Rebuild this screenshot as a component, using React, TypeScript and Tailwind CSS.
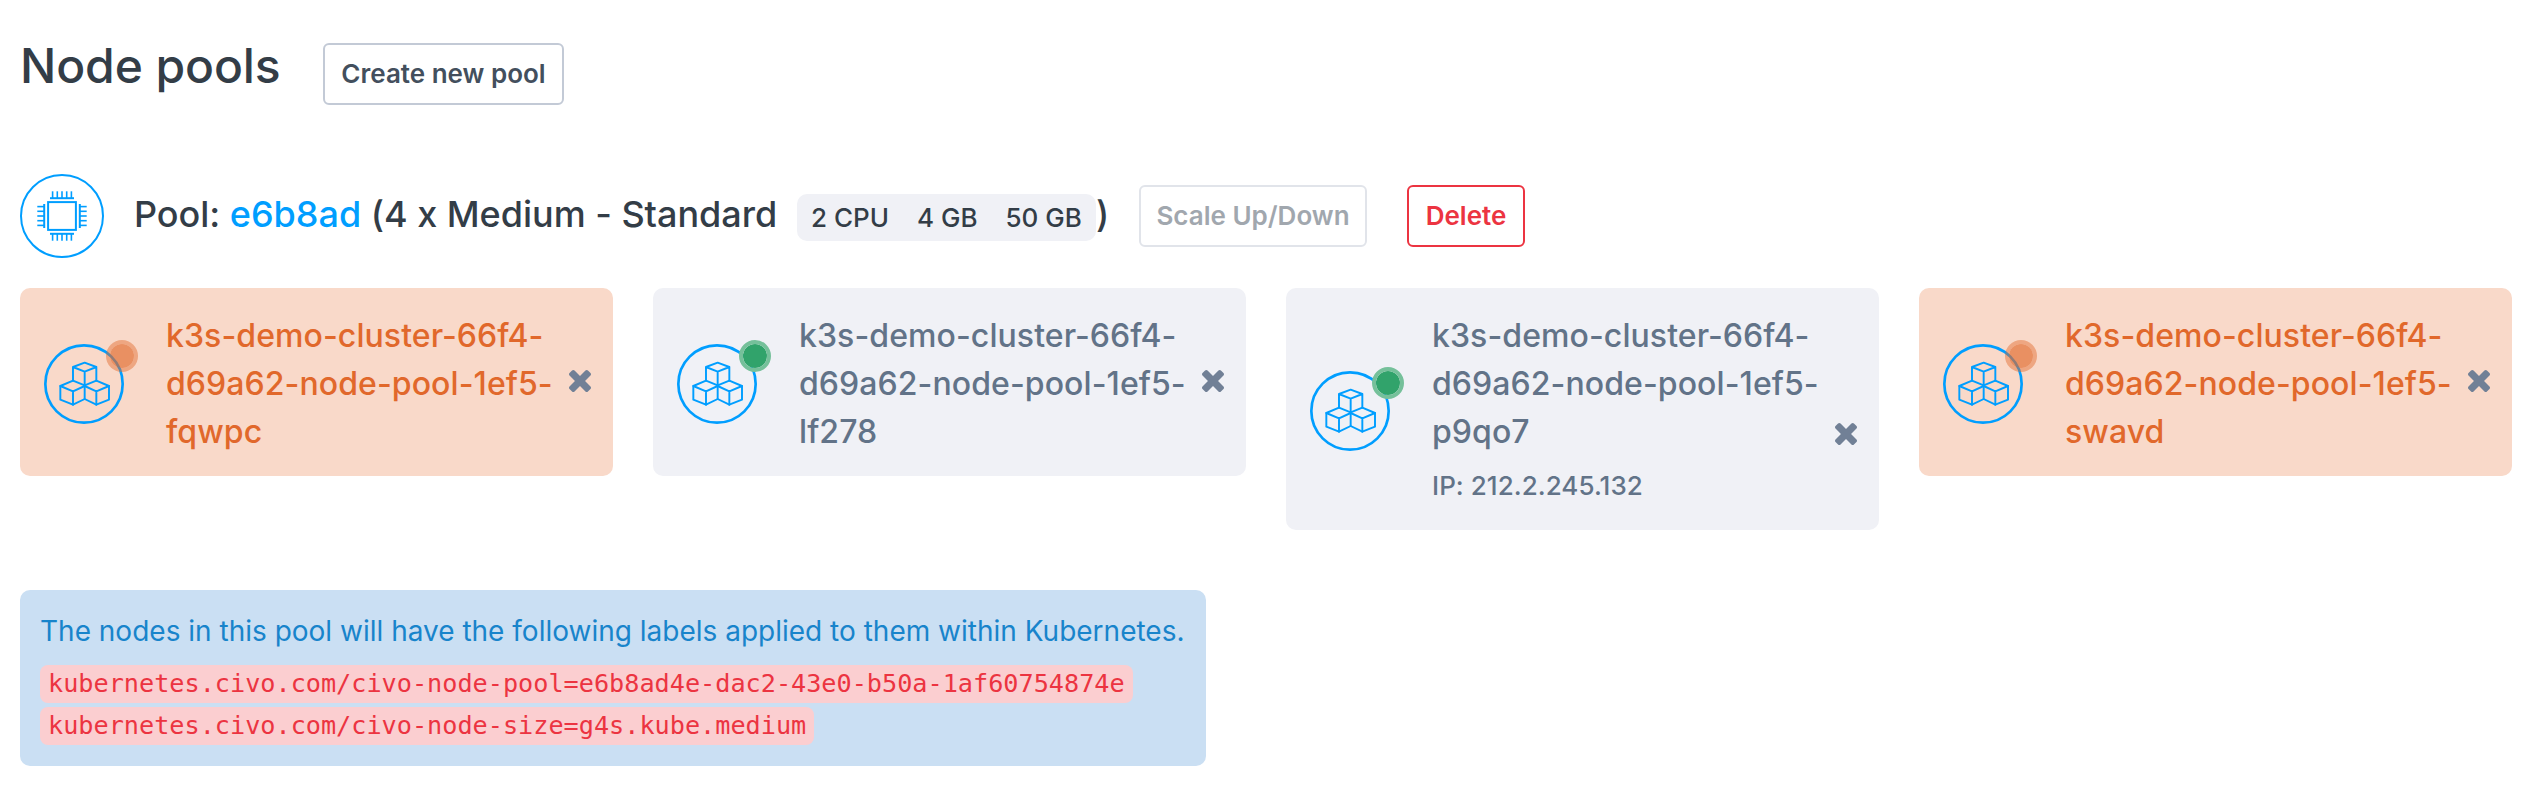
import React from "react";

type PoolNode = { suffix: string; ip?: string; ready: boolean };

const nodes: PoolNode[] = [
  { suffix: "fqwpc", ready: false },
  { suffix: "lf278", ready: true },
  { suffix: "p9qo7", ready: true, ip: "212.2.245.132" },
  { suffix: "swavd", ready: false },
];

function ChipIcon() {
  const offsets = [-9.4, -4.7, 0, 4.7, 9.4];
  return (
    <svg viewBox="-42 -42 84 84" className="size-[84px] shrink-0" fill="none" stroke="#009eff">
      <circle r="41" strokeWidth="2" />
      <rect x="-13.9" y="-13.9" width="27.8" height="27.8" strokeWidth="2" />
      {[0, 90, 180, 270].map((angle) => (
        <g key={angle} transform={`rotate(${angle})`} strokeWidth="1.6">
          <path d="M-12 -17.8H12" strokeWidth="2" />
          {offsets.map((x) => (
            <path key={x} d={`M${x} -17.8V-24.7`} />
          ))}
        </g>
      ))}
    </svg>
  );
}

function CubesIcon() {
  return (
    <svg
      viewBox="0 0 240 240"
      className="size-20"
      fill="none"
      stroke="#009eff"
      strokeWidth="5.8"
      strokeLinejoin="round"
      strokeLinecap="round"
    >
      <circle cx="120" cy="120" r="116" strokeWidth="8" />
      <path d="M87 110V69L122 56L157 69V110M87 69L122 83L157 69M122 83V165" />
      <path d="M87 110L122 124L157 110L195 126V167L157 182L122 165L87 182L49 167V126Z" />
      <path d="M49 126L87 142L122 126L157 142L195 126M87 142V182M157 142V182" />
    </svg>
  );
}

function CloseIcon() {
  return (
    <svg viewBox="110 366 1188 1188" className="size-[22px]" fill="#718096">
      <path d="M1298 1322q0 40-28 68l-136 136q-28 28-68 28t-68-28l-294-294-294 294q-28 28-68 28t-68-28l-136-136q-28-28-28-68t28-68l294-294-294-294q-28-28-28-68t28-68l136-136q28-28 68-28t68 28l294 294 294-294q28-28 68-28t68 28l136 136q28 28 28 68t-28 68l-294 294 294 294q28 28 28 68z" />
    </svg>
  );
}

function NodeCard({ node }: { node: PoolNode }) {
  return (
    <div
      className={`flex items-center rounded-[10px] pt-6 pb-5 pl-6 ${
        node.ready ? "bg-[#f0f1f6] text-[#627388]" : "bg-[#f9d9c9] text-[#e1682b]"
      }`}
    >
      <div className="relative size-20 shrink-0">
        <CubesIcon />
        <span
          className={`absolute -top-1 left-[62px] size-8 rounded-full border-4 bg-clip-padding ${
            node.ready ? "border-[#75c09a] bg-[#31a36b]" : "border-[#e1682b]/45 bg-[#e1682b]/65"
          }`}
        />
      </div>
      <div className="ml-[42px] w-[396px] shrink-0 font-medium">
        <div className="text-[32px] leading-[48px] tracking-[0.08px]">
          k3s-demo-cluster-66f4-
          <br />
          d69a62-node-pool-1ef5-
          <br />
          {node.suffix}
        </div>
        {node.ip && (
          <div className="pt-[7px] pb-px text-[26px] leading-[46px] tracking-[0.05px]">IP: {node.ip}</div>
        )}
      </div>
      <button className={`ml-[7px] ${node.ip ? "mt-[46px]" : "-mt-[7px]"}`} aria-label="Remove node">
        <CloseIcon />
      </button>
    </div>
  );
}

export default function App() {
  return (
    <main className="h-[812px] bg-white pl-5 pr-[18px] font-['Inter',sans-serif] text-[#333d47]">
      <header className="flex h-[174px] items-start">
        <h1 className="mt-[37px] w-[303px] whitespace-nowrap text-[48px] font-medium leading-[58px] tracking-[-0.1px]">
          Node pools
        </h1>
        <button className="mt-[43px] h-[62px] w-[241px] whitespace-nowrap rounded-md border-2 border-[#c3cad6] pb-px text-[26px] font-semibold text-[#434f5d]">
          Create new pool
        </button>
      </header>

      <section className="flex h-[84px] items-center">
        <ChipIcon />
        <h2 className="ml-[30px] flex w-[1005px] items-center whitespace-nowrap text-[36px] font-medium leading-[54px]">
          <span className="-mt-1 w-[663px] tracking-[-0.02px]">
            Pool: <a className="text-[#009eff]">e6b8ad</a> (4 x Medium - Standard
          </span>
          <span className="mt-[3px] flex h-[47px] w-[299px] items-center gap-7 rounded-[10px] bg-[#f0f1f6] pl-[14px] text-[26px]">
            <span>2 CPU</span>
            <span>4 GB</span>
            <span>50 GB</span>
          </span>
          <span className="-mt-1">)</span>
        </h2>
        <button className="h-[62px] w-[228px] whitespace-nowrap rounded-md border-2 border-[#e1e4ea] pb-px text-[26px] font-semibold text-[#a1a7ae]">
          Scale Up/Down
        </button>
        <button className="ml-10 h-[62px] w-[118px] rounded-md border-2 border-[#ec3441] pb-px text-[26px] font-semibold text-[#ec3441]">
          Delete
        </button>
      </section>

      <section className="mt-[30px] grid h-[242px] grid-cols-4 items-start gap-10">
        {nodes.map((node) => (
          <NodeCard key={node.suffix} node={node} />
        ))}
      </section>

      <aside className="mt-[60px] flex h-[176px] w-[1186px] flex-col items-start rounded-[10px] bg-[#cadff3] px-5 pt-5">
        <p className="whitespace-nowrap text-[28px] leading-[42px] text-[#1884cb]">
          The nodes in this pool will have the following labels applied to them within Kubernetes.
        </p>
        <code className="mt-[13px] h-[38px] rounded-lg bg-[#fbced0] px-2 font-['DejaVu_Sans_Mono',monospace] text-[25.2px] leading-[38px] text-[#ec3441]">
          kubernetes.civo.com/civo-node-pool=e6b8ad4e-dac2-43e0-b50a-1af60754874e
        </code>
        <code className="mt-1 h-[38px] rounded-lg bg-[#fbced0] px-2 font-['DejaVu_Sans_Mono',monospace] text-[25.2px] leading-[38px] text-[#ec3441]">
          kubernetes.civo.com/civo-node-size=g4s.kube.medium
        </code>
      </aside>
    </main>
  );
}
